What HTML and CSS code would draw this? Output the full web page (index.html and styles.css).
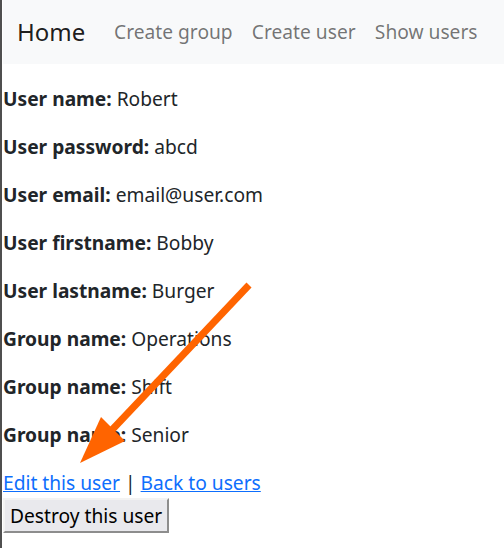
FILE: index.html
```html
<!DOCTYPE html>
<html lang="en">
<head>
<meta charset="utf-8">
<title>User</title>
<link rel="stylesheet" href="styles.css">
</head>
<body>
<div class="page">
  <nav class="navbar">
    <a class="brand" href="#">Home</a>
    <ul class="nav">
      <li><a class="nav-link" href="#">Create group</a></li>
      <li><a class="nav-link" href="#">Create user</a></li>
      <li><a class="nav-link" href="#">Show users</a></li>
    </ul>
  </nav>
  <main class="content">
    <p><strong>User name:</strong> Robert</p>
    <p><strong>User password:</strong> abcd</p>
    <p><strong>User email:</strong> email@user.com</p>
    <p><strong>User firstname:</strong> Bobby</p>
    <p><strong>User lastname:</strong> Burger</p>
    <p><strong>Group name:</strong> Operations</p>
    <p><strong>Group name:</strong> Shift</p>
    <p><strong>Group name:</strong> Senior</p>
    <div class="links"><a href="#">Edit this user</a> | <a href="#">Back to users</a></div>
    <div><button class="btn" type="button">Destroy this user</button></div>
  </main>
  <svg class="arrow" width="504" height="548" viewBox="0 0 504 548">
    <line x1="249" y1="285" x2="110" y2="432" stroke="#ff6400" stroke-width="7" stroke-linecap="butt"/>
    <polygon points="80,463 101,417 125,441" fill="#ff6400"/>
  </svg>
</div>
</body>
</html>
```
FILE: styles.css
```css
html, body {
  margin: 0;
  padding: 0;
  background: #fff;
}
body {
  font-family: "Noto Sans", "Liberation Sans", sans-serif;
  font-size: 19.2px;
  line-height: 28.8px;
  color: #212529;
}
.page {
  position: relative;
  width: 504px;
  min-height: 548px;
  border-left: 2px solid #4f4f4f;
  padding-left: 1px;
  box-sizing: border-box;
}
.navbar {
  display: flex;
  align-items: center;
  height: 64px;
  background: #f8f9fa;
  padding: 0 14px;
}
.brand {
  font-size: 24px;
  line-height: 36px;
  color: rgba(0, 0, 0, 0.9);
  text-decoration: none;
  margin-right: 19.2px;
  white-space: nowrap;
}
.nav {
  display: flex;
  list-style: none;
  margin: 0;
  padding: 0;
}
.nav-link {
  display: block;
  padding: 0 9.6px;
  color: rgba(0, 0, 0, 0.55);
  text-decoration: none;
  white-space: nowrap;
}
.content {
  padding-top: 21px;
}
.content p {
  margin: 0 0 19.2px 0;
}
.content strong {
  font-weight: 700;
}
.links a {
  color: #0d6efd;
  text-decoration: underline;
}
.btn {
  font-family: "Noto Sans", "Liberation Sans", sans-serif;
  font-size: 19.2px;
  line-height: 25px;
  color: #000;
  background: #e9e9ed;
  border: 2px solid;
  border-color: #f3f3f3 #8d8d8d #8d8d8d #f3f3f3;
  padding: 3px 5px;
  margin: 0;
  border-radius: 0;
}
.arrow {
  position: absolute;
  left: -2px;
  top: 0;
  pointer-events: none;
}
```
